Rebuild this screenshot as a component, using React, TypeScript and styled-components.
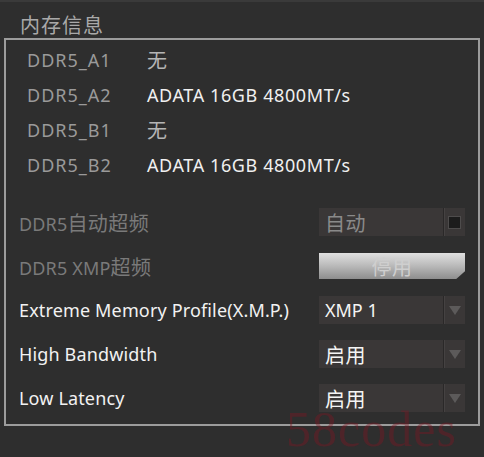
import React from "react";
import styled, { createGlobalStyle } from "styled-components";

const Global = createGlobalStyle`
  html, body { margin: 0; padding: 0; background: #2e2e2e; }
  body { width: 484px; height: 457px; overflow: hidden; font-family: "Noto Sans", "Noto Sans CJK SC", sans-serif; }
`;

const Page = styled.div`
  position: relative;
  width: 484px;
  height: 457px;
  box-sizing: border-box;
  border-top: 2px solid #3a3a3a;
  padding: 10px 4px 0 4px;
  display: flex;
  flex-direction: column;
`;

const Title = styled.div`
  font-size: 20px;
  line-height: 26px;
  letter-spacing: 1px;
  color: #a9a9a9;
  padding-left: 16px;
  height: 26px;
  font-family: "Noto Sans CJK SC", sans-serif;
`;

const Han = styled.span`
  font-family: "Noto Sans CJK SC", sans-serif;
  font-size: 20px;
  letter-spacing: 0.5px;
`;

const Panel = styled.div`
  width: 476px;
  height: 388px;
  box-sizing: border-box;
  border: 2px solid #9c9c9c;
  padding: 2px 13px 0 13px;
  display: flex;
  flex-direction: column;
`;

const InfoList = styled.div`
  display: flex;
  flex-direction: column;
  padding-left: 8px;
  margin-bottom: 18px;
`;

const InfoRow = styled.div`
  height: 35px;
  display: flex;
  align-items: center;
  font-size: 18px;
  letter-spacing: 0.6px;
`;

const InfoLabel = styled.span`
  width: 120px;
  color: #9a9a9a;
  letter-spacing: 1px;
`;

const InfoValue = styled.span<{ $empty?: boolean }>`
  color: ${(p) => (p.$empty ? "#b5b5b5" : "#f0f0f0")};
`;

const Settings = styled.div`
  display: flex;
  flex-direction: column;
`;

const SettingRow = styled.div`
  height: 44px;
  display: flex;
  align-items: center;
  justify-content: space-between;
`;

const SettingLabel = styled.span<{ $disabled?: boolean }>`
  font-size: 18px;
  letter-spacing: 0.15px;
  color: ${(p) => (p.$disabled ? "#7a7a7a" : "#f2f2f2")};
`;

const Select = styled.div`
  width: 146px;
  height: 28px;
  background: #3a3737;
  display: flex;
  align-items: stretch;
  box-sizing: border-box;
`;

const SelectText = styled.span<{ $disabled?: boolean }>`
  flex: 1;
  display: flex;
  align-items: center;
  padding-left: 6px;
  font-size: 18px;
  color: ${(p) => (p.$disabled ? "#8a8a8a" : "#f4f4f4")};
`;

const SelectArrow = styled.span`
  width: 21px;
  border-left: 1px solid #2a2828;
  box-shadow: inset 1px 0 0 #454242;
  margin-left: 1px;
  display: flex;
  align-items: center;
  justify-content: center;
`;

const Arrow = styled.span`
  width: 0;
  height: 0;
  border-left: 6px solid transparent;
  border-right: 6px solid transparent;
  border-top: 9px solid #5c5a5a;
`;

const Square = styled.span`
  width: 11px;
  height: 11px;
  background: #1c1c1c;
  border: 1px solid #4e4c4c;
`;

const Button = styled.div`
  width: 146px;
  height: 26px;
  background: linear-gradient(to bottom, #e0e0e0 0%, #bdbdbd 45%, #8e8e8e 100%);
  display: flex;
  align-items: center;
  justify-content: center;
  color: #cfcfcf;
  box-shadow: 0 -2px 0 #232323;
  clip-path: polygon(0 0, 100% 0, 100% 70%, 94% 100%, 0 100%);
`;

const Watermark = styled.div`
  position: absolute;
  left: 286px;
  top: 398px;
  font-family: "Liberation Serif", serif;
  font-size: 50px;
  letter-spacing: 1px;
  color: rgba(125, 25, 35, 0.42);
  pointer-events: none;
`;

const info = [
  { label: "DDR5_A1", value: "无", empty: true },
  { label: "DDR5_A2", value: "ADATA 16GB 4800MT/s" },
  { label: "DDR5_B1", value: "无", empty: true },
  { label: "DDR5_B2", value: "ADATA 16GB 4800MT/s" },
];

export default function App() {
  return (
    <>
      <Global />
      <Page>
        <Title>内存信息</Title>
        <Panel>
          <InfoList>
            {info.map((r) => (
              <InfoRow key={r.label}>
                <InfoLabel>{r.label}</InfoLabel>
                <InfoValue $empty={r.empty}>
                  {r.empty ? <Han>{r.value}</Han> : r.value}
                </InfoValue>
              </InfoRow>
            ))}
          </InfoList>
          <Settings>
            <SettingRow>
              <SettingLabel $disabled>
                DDR5<Han>自动超频</Han>
              </SettingLabel>
              <Select>
                <SelectText $disabled>
                  <Han>自动</Han>
                </SelectText>
                <SelectArrow>
                  <Square />
                </SelectArrow>
              </Select>
            </SettingRow>
            <SettingRow>
              <SettingLabel $disabled>
                DDR5 XMP<Han>超频</Han>
              </SettingLabel>
              <Button>
                <Han>停用</Han>
              </Button>
            </SettingRow>
            <SettingRow>
              <SettingLabel>Extreme Memory Profile(X.M.P.)</SettingLabel>
              <Select>
                <SelectText>XMP 1</SelectText>
                <SelectArrow>
                  <Arrow />
                </SelectArrow>
              </Select>
            </SettingRow>
            <SettingRow>
              <SettingLabel>High Bandwidth</SettingLabel>
              <Select>
                <SelectText>
                  <Han>启用</Han>
                </SelectText>
                <SelectArrow>
                  <Arrow />
                </SelectArrow>
              </Select>
            </SettingRow>
            <SettingRow>
              <SettingLabel>Low Latency</SettingLabel>
              <Select>
                <SelectText>
                  <Han>启用</Han>
                </SelectText>
                <SelectArrow>
                  <Arrow />
                </SelectArrow>
              </Select>
            </SettingRow>
          </Settings>
        </Panel>
        <Watermark>58codes</Watermark>
      </Page>
    </>
  );
}
